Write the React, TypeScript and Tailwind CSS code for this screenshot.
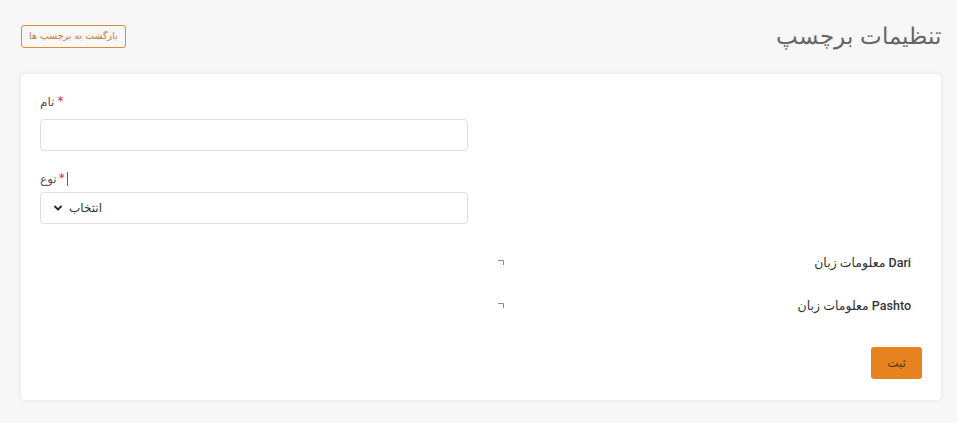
import React from "react";

const fa = "font-['DejaVu_Sans','Noto_Sans',sans-serif]";

const Corner = () => (
  <svg width="6" height="6" viewBox="0 0 6 6" className="block">
    <path d="M0 0.5H5.5V5" fill="none" stroke="#8a8a8a" strokeWidth="1" />
  </svg>
);

const LangRow = ({ name }: { name: string }) => (
  <div className="flex items-center justify-between h-[14px]">
    <Corner />
    <span dir="rtl" className="text-[12.5px] font-medium text-[#333] font-['Roboto','DejaVu_Sans',sans-serif]">
      {name} معلومات زبان
    </span>
  </div>
);

const App = () => {
  return (
    <div className={`min-h-[423px] bg-[#f7f7f7] pl-5 pr-[15px] pt-[22px] pb-5 ${fa}`}>
      <div className="flex items-center justify-between h-[28px]">
        <button className="ml-px h-[23px] px-[7px] border border-[#d98b3c] rounded-[3px] text-[9.5px] text-[#c97a35] leading-none">
          بازگشت به برچسپ ها
        </button>
        <h1 className="text-[23px] font-light text-[#666] leading-none pr-[1px]">تنظیمات برچسپ</h1>
      </div>

      <div className="mt-[23px] bg-white rounded-[5px] shadow-[0_0_3px_rgba(0,0,0,0.08)] border border-[#eeeeee] px-[19px] pt-[21px] pb-[21px]">
        <div className="w-[428px]">
          <div className="flex items-center gap-[3px] text-[12px] text-[#555] h-[14px]">
            <span>نام</span>
            <span className="text-[#d9322e] -mt-[3px]">*</span>
          </div>
          <div className="mt-[10px] h-[32px] border border-[#dedede] rounded-[4px] bg-white" />

          <div className="mt-[21px] flex items-center gap-[2px] text-[12px] text-[#555] h-[14px]">
            <span>نوع</span>
            <span className="text-[#d9322e] -mt-[3px]">*</span>
            <span className="w-px h-[14px] bg-[#c0392b]" />
          </div>
          <div className="mt-[6px] h-[32px] border border-[#dedede] rounded-[4px] bg-white flex items-center pl-[12px] gap-[6px] text-[12px] text-[#333]">
            <svg width="10" height="10" viewBox="0 0 10 10">
              <path d="M2 3.5L5 6.5L8 3.5" fill="none" stroke="#222" strokeWidth="1.8" strokeLinecap="round" strokeLinejoin="round" />
            </svg>
            <span>انتخاب</span>
          </div>
        </div>

        <div className="ml-auto w-[424px] mt-[32px] flex flex-col gap-[29px] pr-[11px]">
          <LangRow name="Dari" />
          <LangRow name="Pashto" />
        </div>

        <div className="flex justify-end mt-[34px]">
          <button className="w-[51px] h-[32px] rounded-[3px] bg-[#e6821f] text-[12px] text-[#5b3712]">ثبت</button>
        </div>
      </div>
    </div>
  );
};

export default App;
